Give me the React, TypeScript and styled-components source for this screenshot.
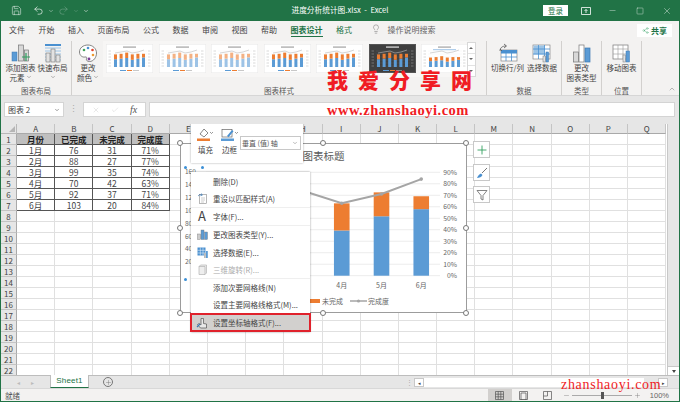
import React from 'react'
import styled, { createGlobalStyle } from 'styled-components'
import { ChevronDown, ChevronUp, Lightbulb, Minus, Square, X, Check, Plus, Share2, Save, Undo2, Redo2 } from 'lucide-react'

const font = '"Noto Sans CJK SC", "Noto Sans", sans-serif'
const green = '#217346'

const Global = createGlobalStyle`
  html,body{margin:0;padding:0;background:#fff;}
  #root{width:680px;height:402px;overflow:hidden;}
  *{box-sizing:border-box;}
`
const Frame = styled.div`
  position:relative;
  width:680px;
  height:402px;
  display:flex;
  flex-direction:column;
  overflow:hidden;
  font-family:${font};
  font-size:8px;
  color:#444;
  border:1px solid ${green};
  border-top:0;
  background:#e6e6e6;
`
const TitleBar = styled.div`
  position:relative;
  height:21px;
  flex:none;
  margin:0 -1px;
  padding:0 0 0 11px;
  background:${green};
  color:#fff;
  display:flex;
  align-items:center;
`
const QuickIcons = styled.div`
  display:flex;
  align-items:center;
  gap:4px;
  svg{display:block;}
`
const QuickGap = styled.span`
  width:3px;
`
const TitleText = styled.div`
  position:absolute;
  left:0;
  right:0;
  top:4px;
  text-align:center;
  font-size:7.7px;
  line-height:12px;
  color:#fff;
  white-space:pre;
`
const WinControls = styled.div`
  margin-left:auto;
  display:flex;
  align-items:center;
`
const Login = styled.div`
  width:25px;
  height:11px;
  background:#fff;
  color:${green};
  font-size:7.5px;
  line-height:11px;
  text-align:center;
  margin-right:4px;
`
const WinBtn = styled.div`
  width:27px;
  height:20px;
  display:flex;
  align-items:center;
  justify-content:center;
`
const TabRow = styled.div`
  height:19px;
  flex:none;
  display:flex;
  align-items:flex-start;
  padding-left:8px;
  gap:13.5px;
  background:#f3f2f1;
  position:relative;
`
const Tab = styled.div<{ $active?: boolean; $green?: boolean }>`
  height:16px;
  line-height:17px;
  font-size:8px;
  color:${p => (p.$active || p.$green ? green : '#444')};
  font-weight:${p => (p.$active ? 600 : 400)};
  border-bottom:${p => (p.$active ? `1.5px solid ${green}` : '0')};
`
const SearchHint = styled.div`
  margin-left:5px;
  display:flex;
  align-items:center;
  gap:7px;
  height:16px;
  color:#666;
  line-height:17px;
`
const ShareBtn = styled.div`
  position:absolute;
  right:7px;
  top:3px;
  width:35px;
  height:13px;
  background:#fff;
  display:flex;
  align-items:center;
  justify-content:center;
  gap:2px;
  color:${green};
  font-weight:700;
  font-size:8px;
`
const Ribbon = styled.div`
  height:56px;
  flex:none;
  display:flex;
  background:#f3f2f1;
  border-bottom:1px solid #d6d6d6;
  position:relative;
`
const Group = styled.div<{ $w: number }>`
  width:${p => p.$w}px;
  flex:none;
  display:flex;
  flex-direction:column;
  margin:1px 0 0;
  border-right:1px solid #d2d0ce;
  height:54px;
`
const GroupBody = styled.div`
  flex:1;
  min-height:0;
  display:flex;
  align-items:flex-start;
  justify-content:center;
`
const GroupSpacer = styled.div`
  flex:1;
`
const GroupLabel = styled.div`
  height:13px;
  line-height:17px;
  text-align:center;
  font-size:7.5px;
  color:#555;
`
const RibbonBtn = styled.div<{ $w: number; $ml?: number }>`
  width:${p => p.$w}px;
  margin-left:${p => p.$ml || 0}px;
  flex:none;
  display:flex;
  flex-direction:column;
  align-items:center;
  font-size:7.5px;
  line-height:9.5px;
  color:#444;
  text-align:center;
  white-space:nowrap;
  padding-top:2px;
  svg.big{display:block;}
`
const BtnLine = styled.span`
  display:flex;
  align-items:center;
  gap:1px;
  height:9.5px;
`
const Gallery = styled.div`
  display:flex;
  align-items:flex-start;
  margin-left:2px;
  padding:1px 0 0 3px;
  height:36px;
  gap:5.5px;
  background:#f7f6f5;
`
const Thumb = styled.svg`
  display:block;
  flex:none;
  margin-top:2px;
`
const GalleryScroll = styled.div`
  width:9px;
  height:35px;
  margin:1px 0 0 -1.5px;
  display:flex;
  flex-direction:column;
  background:#fff;
  border:1px solid #d8d8d8;
`
const ScrollCell = styled.div`
  flex:1;
  display:flex;
  align-items:center;
  justify-content:center;
  color:#555;
  border-bottom:1px solid #e2e2e2;
  &:last-child{border-bottom:0;}
  &::after{
    content:'';
    border-style:solid;
    border-color:#666 transparent transparent transparent;
    border-width:2px 2px 0 2px;
  }
  &:first-child::after{
    border-color:transparent transparent #666 transparent;
    border-width:0 2px 2px 2px;
  }
`
const Collapse = styled.div`
  position:absolute;
  right:3px;
  bottom:0;
  color:#555;
`
const FormulaBar = styled.div`
  flex:none;
  height:28px;
  padding:6px 4px 7px 3px;
  display:flex;
  align-items:stretch;
  background:#e6e6e6;
`
const NameBox = styled.div`
  width:60px;
  background:#fff;
  border:1px solid #d4d4d4;
  display:flex;
  align-items:center;
  justify-content:space-between;
  padding:0 3px 0 3px;
  font-size:8px;
  color:#444;
`
const Grip = styled.div`
  width:19px;
  color:#aaa;
  text-align:center;
  line-height:14px;
  font-size:9px;
`
const FxBox = styled.div`
  width:63px;
  background:#fff;
  border:1px solid #d4d4d4;
  display:flex;
  align-items:center;
  gap:11px;
  padding:0 6px 0 8px;
  color:#b8b8b8;
`
const Fx = styled.span`
  font-family:"Liberation Serif",serif;
  font-style:italic;
  font-size:10px;
  color:#555;
`
const FormulaInput = styled.div`
  flex:1;
  margin-left:3px;
  background:#fff;
  border:1px solid #d4d4d4;
`
const SheetArea = styled.div`
  position:relative;
  flex:1;
  min-height:0;
  display:flex;
  overflow:hidden;
  background:#fff;
`
const Grid = styled.div`
  flex:none;
  width:666px;
  display:grid;
  grid-template-columns:16px repeat(17,38.2px);
  grid-auto-rows:11px;
  grid-template-rows:10px;
  align-content:start;
  line-height:11px;
  color:#333;
`
const Corner = styled.div`
  background:#e6e6e6;
  border-right:1px solid #b8b8b8;
  border-bottom:1px solid #b8b8b8;
  position:relative;
  &::after{
    content:'';
    position:absolute;
    right:1px;
    bottom:1px;
    border-style:solid;
    border-width:0 0 6px 6px;
    border-color:transparent transparent #b5b5b5 transparent;
  }
`
const ColHead = styled.div`
  background:#e6e6e6;
  border-right:1px solid #c4c4c4;
  border-bottom:1px solid #a9a9a9;
  text-align:center;
  line-height:10px;
  font-size:8px;
  color:#444;
`
const RowHead = styled.div`
  background:#e6e6e6;
  border-right:1px solid #a9a9a9;
  border-bottom:1px solid #c4c4c4;
  text-align:center;
  font-size:8px;
  color:#444;
`
const Cell = styled.div`
  border-right:1px solid #e0e0e0;
  border-bottom:1px solid #e0e0e0;
`
const DataCell = styled.div<{ $head?: boolean }>`
  border-right:1px solid #555;
  border-bottom:1px solid #555;
  text-align:center;
  background:${p => (p.$head ? '#bfbfbf' : '#fff')};
  font-weight:${p => (p.$head ? 700 : 400)};
  color:${p => (p.$head ? '#222' : '#444')};
  font-size:8.5px;
`
const VScroll = styled.div`
  flex:1;
  background:#e6e6e6;
  border-left:1px solid #c8c8c8;
  position:relative;
`
const VArrow = styled.div`
  position:absolute;
  left:0;
  right:0;
  bottom:0;
  height:9px;
  background:#fff;
  display:flex;
  align-items:center;
  justify-content:center;
  border-top:1px solid #c8c8c8;
  &::after{
    content:'';
    border-style:solid;
    border-width:3px 2.5px 0 2.5px;
    border-color:#444 transparent transparent transparent;
  }
`
const ChartBox = styled.div`
  position:absolute;
  left:179px;
  top:19px;
  width:287px;
  height:170px;
  background:#fff;
  border:1px solid #9c9c9c;
`
const ChartSvg = styled.svg`
  position:absolute;
  left:0;
  top:0;
  display:block;
`
const ChartTitle = styled.div`
  position:absolute;
  left:0;
  right:0;
  top:4px;
  text-align:center;
  font-size:10.5px;
  line-height:16px;
  color:#595959;
`
const Handle = styled.div<{ $x: number; $y: number }>`
  position:absolute;
  left:${p => p.$x - 3}px;
  top:${p => p.$y - 3}px;
  width:6px;
  height:6px;
  border:1px solid #777;
  border-radius:50%;
  background:#fff;
`
const AxisDot = styled.div<{ $x: number; $y: number }>`
  position:absolute;
  left:${p => p.$x - 1.5}px;
  top:${p => p.$y - 1.5}px;
  width:3px;
  height:3px;
  border-radius:50%;
  background:#3b8fd6;
`
const SideBtn = styled.div<{ $y: number }>`
  position:absolute;
  left:472px;
  top:${p => p.$y}px;
  width:17px;
  height:17px;
  background:#fff;
  border:1px solid #c8c8c8;
  display:flex;
  align-items:center;
  justify-content:center;
`
const MiniBar = styled.div`
  position:absolute;
  left:190px;
  top:-1px;
  width:112px;
  height:40px;
  background:#fff;
  box-shadow:0 0 2px rgba(0,0,0,.35);
  display:flex;
  padding:5px 0 0 5px;
  gap:5px;
  font-size:7.5px;
  color:#444;
`
const MiniBtn = styled.div`
  display:flex;
  flex-direction:column;
  align-items:center;
  width:19px;
  gap:4px;
  line-height:10px;
  svg{display:block;}
`
const Combo = styled.div`
  position:absolute;
  left:49px;
  top:13px;
  width:61px;
  height:14px;
  border:1px solid #c8c8c8;
  display:flex;
  align-items:center;
  justify-content:space-between;
  padding:0 2px 0 1px;
  font-size:7px;
  color:#555;
`
const Menu = styled.div`
  position:absolute;
  left:190px;
  top:48px;
  width:118.5px;
  height:159.5px;
  background:#fff;
  box-shadow:0 0 2px rgba(0,0,0,.4);
  padding:1px 0;
`
const MenuItem = styled.div<{ $disabled?: boolean; $hot?: boolean; $sep?: boolean }>`
  height:17.6px;
  display:flex;
  align-items:center;
  font-size:7.5px;
  white-space:nowrap;
  color:${p => (p.$disabled ? '#aaa' : '#444')};
  background:${p => (p.$hot ? '#d2d0ce' : 'transparent')};
  outline:${p => (p.$hot ? '2px solid #e0222c' : '0')};
  outline-offset:-1px;
  border-bottom:${p => (p.$sep ? '1px solid #efefef' : '0')};
`
const MenuIcon = styled.div`
  width:22px;
  flex:none;
  display:flex;
  align-items:center;
  justify-content:center;
  font-size:13px;
  line-height:14px;
  color:#444;
  svg{display:block;}
`
const TabBar = styled.div`
  height:13px;
  flex:none;
  display:flex;
  align-items:stretch;
  background:#e6e6e6;
  border-top:1px solid #bdbdbd;
  position:relative;
`
const SheetNav = styled.div`
  width:49px;
  flex:none;
  display:flex;
  justify-content:center;
  align-items:center;
  gap:11px;
  color:#bbb;
  font-size:6px;
`
const SheetTab = styled.div`
  width:39px;
  margin-top:-1px;
  background:#fff;
  border-right:1px solid #bdbdbd;
  border-left:1px solid #bdbdbd;
  border-bottom:1.5px solid ${green};
  color:${green};
  text-align:center;
  font-family:"Liberation Sans",sans-serif;
  font-size:8px;
  line-height:12px;
  letter-spacing:.2px;
`
const AddSheet = styled.div`
  margin-left:14px;
  width:10px;
  height:10px;
  align-self:center;
  border:1px solid #777;
  border-radius:50%;
  display:flex;
  align-items:center;
  justify-content:center;
  color:#666;
`
const HScroll = styled.div`
  margin-left:auto;
  width:262px;
  display:flex;
  align-items:center;
  margin-right:11px;
  height:9px;
  align-self:center;
`
const HSplit = styled.div`
  width:8px;
  color:#aaa;
  font-size:7px;
  line-height:9px;
  flex:none;
`
const HBtn = styled.div<{ $right?: boolean }>`
  width:10px;
  height:9px;
  margin-left:${p => (p.$right ? 'auto' : '0')};
  background:#fff;
  border:1px solid #c8c8c8;
  flex:none;
  color:#444;
  font-size:5px;
  line-height:7px;
  text-align:center;
`
const HThumb = styled.div`
  width:220px;
  height:9px;
  background:#fff;
  flex:none;
`
const StatusBar = styled.div`
  height:13px;
  flex:none;
  display:flex;
  align-items:center;
  background:#f3f2f1;
  border-top:1px solid #d8d8d8;
  padding-left:4px;
  font-size:7.5px;
  color:#555;
`
const ViewBtns = styled.div`
  margin-left:auto;
  display:flex;
  align-items:stretch;
  height:12px;
`
const ViewBtn = styled.div<{ $on?: boolean }>`
  width:24px;
  background:${p => (p.$on ? '#d2d0ce' : 'transparent')};
  display:flex;
  align-items:center;
  justify-content:center;
  svg{display:block;}
`
const ZoomBox = styled.div`
  display:flex;
  align-items:center;
  margin-left:3px;
  color:#666;
`
const ZoomTrack = styled.div`
  position:relative;
  width:60px;
  height:1px;
  background:#aaa;
  margin:0 2px;
  &::after{
    content:'';
    position:absolute;
    left:29px;
    top:-3px;
    width:3px;
    height:7px;
    background:#555;
  }
`
const ZoomText = styled.span`
  font-family:"Liberation Sans",sans-serif;
  font-size:7.5px;
  margin:0 10px 0 9px;
`
const Mark = styled.div<{ $x: number; $y: number }>`
  position:absolute;
  left:${p => p.$x}px;
  top:${p => p.$y}px;
  color:#f01c24;
  white-space:nowrap;
`
const BigMark = styled(Mark)`
  display:flex;
  gap:10px;
  font-size:21px;
  line-height:24px;
  font-weight:900;
`
const UrlMark = styled(Mark)`
  font-family:"Liberation Serif",serif;
  font-size:14.5px;
  line-height:16px;
  font-weight:700;
  letter-spacing:.5px;
`
const FootMark = styled(Mark)`
  font-family:"Liberation Serif",serif;
  font-size:14px;
  line-height:16px;
  letter-spacing:.7px;
`

const tabs = ['文件', '开始', '插入', '页面布局', '公式', '数据', '审阅', '视图', '帮助']
const cols = 'ABCDEFGHIJKLMNOPQ'.split('')
const records = [
  { month: '1月', done: 76, left: 31, rate: 71 },
  { month: '2月', done: 88, left: 27, rate: 77 },
  { month: '3月', done: 99, left: 35, rate: 74 },
  { month: '4月', done: 70, left: 42, rate: 63 },
  { month: '5月', done: 92, left: 37, rate: 71 },
  { month: '6月', done: 103, left: 20, rate: 84 },
]
const tableCells: string[][] = [
  ['月份', '已完成', '未完成', '完成度'],
  ...records.map(r => [r.month, String(r.done), String(r.left), r.rate + '%']),
]

function SheetGrid() {
  return (
    <Grid>
      <Corner />
      {cols.map(c => <ColHead key={c}>{c}</ColHead>)}
      {Array.from({ length: 22 }).map((_, r) => (
        <React.Fragment key={r}>
          <RowHead>{r + 1}</RowHead>
          {cols.map((c, i) =>
            r < 7 && i < 4
              ? <DataCell key={c} $head={r === 0}>{tableCells[r][i]}</DataCell>
              : <Cell key={c} />
          )}
        </React.Fragment>
      ))}
    </Grid>
  )
}

// y 轴刻度换算，坐标直接用页面坐标
const baseY = 275.7
const barY = (v: number) => baseY - v * 0.646
const rateY = (v: number) => baseY - v * 1.15
const barX = (i: number) => 222.5 + i * 39.75

function MainChart() {
  const grid = Array.from({ length: 10 }).map((_, i) => baseY - i * 11.49)
  const line = records.map((r, i) => `${barX(i)},${rateY(r.rate)}`).join(' ')
  return (
    <ChartSvg width={285} height={168} viewBox="181 144 285 168">
      {grid.map((y, i) => <line key={i} x1={206} x2={440} y1={y} y2={y} stroke="#ececec" strokeWidth={1} />)}
      {records.map((r, i) => (
        <g key={r.month}>
          <rect x={barX(i) - 7.8} y={barY(r.done)} width={15.6} height={baseY - barY(r.done)} fill="#5b9bd5" />
          <rect x={barX(i) - 7.8} y={barY(r.done + r.left)} width={15.6} height={barY(r.done) - barY(r.done + r.left)} fill="#ed7d31" />
          {i > 2 && <text x={barX(i)} y={288} fontSize={7} fill="#666" textAnchor="middle">{r.month}</text>}
        </g>
      ))}
      <polyline points={line} fill="none" stroke="#a5a5a5" strokeWidth={2} />
      {records.map((r, i) => <circle key={i} cx={barX(i)} cy={rateY(r.rate)} r={1.8} fill="#a5a5a5" />)}
      {grid.map((y, i) => (
        <text key={i} x={457} y={y + 2.5} fontSize={6.8} fill="#666" textAnchor="end">{i * 10}%</text>
      ))}
      {[160, 140, 120, 100, 80, 60, 40, 20].map((v, i) => (
        <text key={v} x={185} y={174 + i * 12.9} fontSize={6.5} fill="#666">{v}</text>
      ))}
      <rect x={310} y={299} width={10} height={4} fill="#ed7d31" />
      <text x={322} y={304} fontSize={7} fill="#666">未完成</text>
      <line x1={350} x2={367} y1={301} y2={301} stroke="#a5a5a5" strokeWidth={1.5} />
      <circle cx={358.5} cy={301} r={1.6} fill="#a5a5a5" />
      <text x={368} y={304} fontSize={7} fill="#666">完成度</text>
    </ChartSvg>
  )
}

const thumbBars = [[13, 8], [14, 8], [15, 9], [12, 9], [14, 8], [16, 6]]
const axisTicks = [7, 10, 13, 16, 19, 22]

// 样式库缩略图，variant 1 为浅色，legendTop 时图例在标题下
function MiniChart({ dark, variant = 0, legendTop }: { dark?: boolean; variant?: number; legendTop?: boolean }) {
  const base = 23
  const k = legendTop ? 0.45 : 0.6
  const blue = variant === 1 ? '#9dc3e6' : '#5b9bd5'
  const orange = variant === 1 ? '#f4b183' : '#ed7d31'
  const tick = dark ? '#8a8a8a' : '#c8c8c8'
  return (
    <Thumb width={47} height={29} viewBox="0 0 47 29">
      <rect x={0.25} y={0.25} width={46.5} height={28.5} fill={dark ? '#3f3f3f' : '#fff'} stroke={dark ? '#3f3f3f' : '#e8e8e8'} strokeWidth={0.5} />
      <rect x={17} y={2.4} width={13} height={1.4} fill={dark ? '#ccc' : '#b0b0b0'} />
      {legendTop && <rect x={12} y={5.2} width={23} height={1} fill="#9dc3e6" />}
      {axisTicks.map(y => (
        <g key={y}>
          <line x1={7} x2={41} y1={y} y2={y} stroke={dark ? '#555' : '#f0f0f0'} strokeWidth={0.5} />
          <line x1={2.5} x2={5} y1={y} y2={y} stroke={tick} strokeWidth={0.7} />
          <line x1={42} x2={44.5} y1={y} y2={y} stroke={tick} strokeWidth={0.7} />
        </g>
      ))}
      {thumbBars.map((b, i) => (
        <g key={i}>
          <rect x={8 + i * 5.6} y={base - b[0] * k} width={3} height={b[0] * k} fill={blue} />
          <rect x={8 + i * 5.6} y={base - (b[0] + b[1]) * k} width={3} height={b[1] * k} fill={orange} />
        </g>
      ))}
      <polyline points="9,9 15,8 21,7 26,9 32,8 38,6" fill="none" stroke={dark ? '#bbb' : '#b8b8b8'} strokeWidth={0.6} />
      {!legendTop && <rect x={14} y={26} width={6} height={1} fill="#5b9bd5" />}
      {!legendTop && <rect x={21} y={26} width={5} height={1} fill="#ed7d31" />}
      {!legendTop && <rect x={27} y={26} width={6} height={1} fill={tick} />}
    </Thumb>
  )
}

function AddElementIcon() {
  return (
    <svg className="big" width={20} height={20} viewBox="0 0 20 20">
      <rect x={1} y={9} width={5} height={9} fill="#5b9bd5" stroke="#3d7ab3" strokeWidth={0.5} />
      <rect x={7.5} y={2} width={5} height={16} fill="#d8d8d8" stroke="#777" strokeWidth={0.7} />
      <rect x={13.5} y={7} width={4} height={11} fill="#d8d8d8" stroke="#777" strokeWidth={0.7} />
      <path d="M11 14h8M15 10v8" stroke="#2f9e5f" strokeWidth={1.2} />
    </svg>
  )
}
function QuickLayoutIcon() {
  return (
    <svg className="big" width={20} height={20} viewBox="0 0 20 20">
      <rect x={2} y={1} width={16} height={2} fill="#4a90d0" />
      {[5, 8, 11, 14, 17].map(y => <line key={y} x1={2} x2={18} y1={y} y2={y} stroke="#9cc4e6" strokeWidth={1} />)}
      <rect x={3} y={10} width={4} height={9} fill="#e2e2e2" stroke="#777" strokeWidth={0.6} />
      <rect x={8} y={6} width={4} height={13} fill="#e2e2e2" stroke="#777" strokeWidth={0.6} />
      <rect x={13} y={12} width={4} height={7} fill="#e2e2e2" stroke="#777" strokeWidth={0.6} />
    </svg>
  )
}
function PaletteIcon() {
  return (
    <svg className="big" width={20} height={20} viewBox="0 0 20 20">
      <path d="M10 2C5 2 1.500 5 1.500 9s3.500 5.500 5.500 5 2 1 1.500 2 .5 2.500 3 2.500c4 0 7-4 7-8.500S14.500 2 10 2z" fill="#fff" stroke="#666" strokeWidth={0.8} />
      <circle cx={6} cy={7} r={1.3} fill="#3fa35b" />
      <circle cx={10} cy={5} r={1.3} fill="#4a90d0" />
      <circle cx={14.500} cy={7} r={1.3} fill="#e0422b" />
      <circle cx={15} cy={12} r={1.3} fill="#ed9a31" />
      <circle cx={11} cy={16} r={1.4} fill="#7d3c98" />
    </svg>
  )
}
function SwitchIcon() {
  return (
    <svg className="big" width={20} height={20} viewBox="0 0 20 20">
      <rect x={3} y={7} width={16} height={11} fill="#fff" stroke="#888" strokeWidth={0.7} />
      <rect x={3} y={7} width={16} height={3.500} fill="#4a90d0" />
      <path d="M8 7v11M13.500 7v11M3 14h16" stroke="#4a90d0" strokeWidth={0.8} />
      <path d="M2 8c0-3 2-5 6-5M6 1l2.500 2L6 5M2 6l2 2" fill="none" stroke="#555" strokeWidth={0.8} />
    </svg>
  )
}
function SelectDataIcon() {
  return (
    <svg className="big" width={20} height={20} viewBox="0 0 20 20">
      <rect x={1} y={2} width={17} height={14} fill="#fff" stroke="#888" strokeWidth={0.7} />
      <rect x={1.500} y={2.500} width={11} height={9} fill="#9cc4e6" />
      <path d="M1 6h17M1 11h17M6.500 2v14M12.500 2v14" stroke="#4a90d0" strokeWidth={0.8} />
      <rect x={11} y={13} width={2.500} height={6} fill="#e2e2e2" stroke="#777" strokeWidth={0.5} />
      <rect x={14} y={9} width={2.500} height={10} fill="#5b9bd5" stroke="#3d7ab3" strokeWidth={0.5} />
    </svg>
  )
}
function ChangeTypeIcon() {
  return (
    <svg className="big" width={20} height={20} viewBox="0 0 20 20">
      <rect x={1.500} y={9} width={5} height={10} fill="#d8d8d8" stroke="#777" strokeWidth={0.7} />
      <rect x={7} y={2} width={5} height={17} fill="#fff" stroke="#777" strokeWidth={0.7} />
      <rect x={13} y={5} width={5} height={14} fill="#5b9bd5" stroke="#3d7ab3" strokeWidth={0.7} />
    </svg>
  )
}
function MoveChartIcon() {
  return (
    <svg className="big" width={20} height={20} viewBox="0 0 20 20">
      <rect x={1} y={2} width={15} height={14} fill="#fff" stroke="#777" strokeWidth={0.7} />
      <path d="M1 6h15M1 11h15M6 2v14M11 2v14" stroke="#999" strokeWidth={0.6} />
      <rect x={11} y={12} width={2.500} height={7} fill="#e2e2e2" stroke="#777" strokeWidth={0.5} />
      <rect x={14} y={8} width={3.500} height={11} fill="#5b9bd5" stroke="#3d7ab3" strokeWidth={0.5} />
    </svg>
  )
}
function SmallChart({ grey }: { grey?: boolean }) {
  return (
    <svg width={11} height={11} viewBox="0 0 11 11">
      <rect x={0.500} y={5} width={3} height={5.500} fill={grey ? '#ddd' : '#ccc'} stroke="#777" strokeWidth={0.4} />
      <rect x={4} y={1} width={3} height={9.500} fill={grey ? '#ddd' : '#5b9bd5'} stroke="#777" strokeWidth={0.4} />
      <rect x={7.500} y={3} width={3} height={7.500} fill={grey ? '#ddd' : '#5b9bd5'} stroke="#777" strokeWidth={0.4} />
    </svg>
  )
}
function DataGridIcon() {
  return (
    <svg width={11} height={11} viewBox="0 0 11 11">
      <rect x={0.500} y={0.500} width={8} height={8} fill="#4a90d0" />
      <path d="M0.500 3.300h8M0.500 6h8M3.300 .5v8M6 .5v8" stroke="#fff" strokeWidth={0.5} />
      <rect x={7} y={6} width={1.800} height={5} fill="#bbb" />
      <rect x={9} y={4} width={1.800} height={7} fill="#5b9bd5" />
    </svg>
  )
}

const menuItems = [
  { label: '删除(D)' },
  { label: '重设以匹配样式(A)', icon: 'reset', sep: true },
  { label: '字体(F)...', icon: 'font', sep: true },
  { label: '更改图表类型(Y)...', icon: 'type' },
  { label: '选择数据(E)...', icon: 'data' },
  { label: '三维旋转(R)...', icon: 'rotate', disabled: true, sep: true },
  { label: '添加次要网格线(N)' },
  { label: '设置主要网格线格式(M)...' },
  { label: '设置坐标轴格式(F)...', icon: 'format', hot: true },
]

function MenuGlyph({ name }: { name?: string }) {
  if (name === 'reset') {
    return (
      <svg width={11} height={11} viewBox="0 0 11 11">
        <rect x={2.500} y={1.500} width={7} height={9} fill="#fff" stroke="#888" strokeWidth={0.6} />
        <path d="M1 3a3 3 0 0 1 4-1M4.500 .5l.8 1.700-1.800.5" fill="none" stroke="#3d7ab3" strokeWidth={0.7} />
        <path d="M4 5h4M4 7h4M4 9h3" stroke="#999" strokeWidth={0.5} />
      </svg>
    )
  }
  if (name === 'font') return <>A</>
  if (name === 'type') return <SmallChart />
  if (name === 'data') return <DataGridIcon />
  if (name === 'rotate') {
    return (
      <svg width={11} height={11} viewBox="0 0 11 11">
        <path d="M2 2.500h6v8H2zM2 2.500l1.500-1.500h6v8L8 10.500" fill="#eee" stroke="#aaa" strokeWidth={0.6} />
      </svg>
    )
  }
  if (name === 'format') {
    return (
      <svg width={12} height={12} viewBox="0 0 12 12">
        <path d="M5 1.500h2.500v5l3 .5v4H4.500L1.500 7.500 3 6.500l2 1.500z" fill="#e8e8e8" stroke="#555" strokeWidth={0.7} />
        <path d="M1 10l3-3" stroke="#3d7ab3" strokeWidth={1.200} />
      </svg>
    )
  }
  return null
}

export default function App() {
  return (
    <Frame>
      <Global />
      <TitleBar>
        <QuickIcons>
          <Save size={11} strokeWidth={1.1} />
          <QuickGap />
          <Undo2 size={11} strokeWidth={1.4} />
          <ChevronDown size={6} strokeWidth={1.5} />
          <Redo2 size={11} strokeWidth={1.1} color="#7fae96" />
          <ChevronDown size={6} strokeWidth={1.5} color="#7fae96" />
          <ChevronDown size={6} strokeWidth={2} />
        </QuickIcons>
        <TitleText>进度分析统计图.xlsx  -  Excel</TitleText>
        <WinControls>
          <Login>登录</Login>
          <WinBtn>
            <svg width={10} height={8} viewBox="0 0 10 8"><path d="M.5.5h9v7h-9zM5 6V2.500M3.500 4L5 2.500 6.500 4" fill="none" stroke="#fff" strokeWidth={0.8} /></svg>
          </WinBtn>
          <WinBtn><Minus size={9} strokeWidth={1} /></WinBtn>
          <WinBtn><Square size={8} strokeWidth={1.1} /></WinBtn>
          <WinBtn><X size={10} strokeWidth={1} /></WinBtn>
        </WinControls>
      </TitleBar>
      <TabRow>
        {tabs.map(t => <Tab key={t}>{t}</Tab>)}
        <Tab $active>图表设计</Tab>
        <Tab $green>格式</Tab>
        <SearchHint>
          <Lightbulb size={10} strokeWidth={1} color="#555" />
          操作说明搜索
        </SearchHint>
        <ShareBtn><Share2 size={7} strokeWidth={1.2} color="#2f9e5f" />共享</ShareBtn>
      </TabRow>
      <Ribbon>
        <Group $w={71}>
          <GroupBody>
            <RibbonBtn $w={33}><AddElementIcon /><BtnLine>添加图表</BtnLine><BtnLine>元素<ChevronDown size={6} strokeWidth={1.5} /></BtnLine></RibbonBtn>
            <RibbonBtn $w={31}><QuickLayoutIcon /><BtnLine>快速布局</BtnLine><BtnLine><ChevronDown size={6} strokeWidth={1.5} /></BtnLine></RibbonBtn>
          </GroupBody>
          <GroupLabel>图表布局</GroupLabel>
        </Group>
        <Group $w={415}>
          <GroupBody>
            <RibbonBtn $w={26} $ml={3}><PaletteIcon /><BtnLine>更改</BtnLine><BtnLine>颜色<ChevronDown size={6} strokeWidth={1.5} /></BtnLine></RibbonBtn>
            <Gallery>
              <MiniChart />
              <MiniChart variant={1} />
              <MiniChart variant={1} />
              <MiniChart />
              <MiniChart />
              <MiniChart dark />
              <MiniChart legendTop />
            </Gallery>
            <GalleryScroll>
              <ScrollCell />
              <ScrollCell />
              <ScrollCell />
            </GalleryScroll>
            <GroupSpacer />
          </GroupBody>
          <GroupLabel>图表样式</GroupLabel>
        </Group>
        <Group $w={75}>
          <GroupBody>
            <RibbonBtn $w={36}><SwitchIcon />切换行/列</RibbonBtn>
            <RibbonBtn $w={33}><SelectDataIcon />选择数据</RibbonBtn>
          </GroupBody>
          <GroupLabel>数据</GroupLabel>
        </Group>
        <Group $w={40}>
          <GroupBody>
            <RibbonBtn $w={38}><ChangeTypeIcon />更改<BtnLine>图表类型</BtnLine></RibbonBtn>
          </GroupBody>
          <GroupLabel>类型</GroupLabel>
        </Group>
        <Group $w={40}>
          <GroupBody>
            <RibbonBtn $w={38}><MoveChartIcon />移动图表</RibbonBtn>
          </GroupBody>
          <GroupLabel>位置</GroupLabel>
        </Group>
        <Collapse><ChevronUp size={8} strokeWidth={1.2} /></Collapse>
      </Ribbon>
      <FormulaBar>
        <NameBox>图表 2<ChevronDown size={6} strokeWidth={2} /></NameBox>
        <Grip>⋮</Grip>
        <FxBox>
          <X size={8} strokeWidth={1} />
          <Check size={8} strokeWidth={1} />
          <Fx>fx</Fx>
        </FxBox>
        <FormulaInput />
      </FormulaBar>
      <SheetArea>
        <SheetGrid />
        <VScroll><VArrow /></VScroll>
        <ChartBox>
          <MainChart />
          <ChartTitle>图表标题</ChartTitle>
        </ChartBox>
        {[[179, 19], [322, 19], [465, 19], [179, 104], [465, 104], [179, 189], [322, 189], [465, 189]].map(([x, y]) => (
          <Handle key={`${x}-${y}`} $x={x} $y={y} />
        ))}
        <AxisDot $x={184} $y={43} />
        <AxisDot $x={201} $y={43} />
        <AxisDot $x={184} $y={155} />
        <MiniBar>
          <MiniBtn>
            <svg width={18} height={13} viewBox="0 0 18 13">
              <path d="M3 6l4-5 4 4-4 4z" fill="#fff" stroke="#555" strokeWidth={0.7} />
              <path d="M13 4l1.500 1.500L16 4" fill="none" stroke="#555" strokeWidth={0.6} />
              <rect x={0} y={10.500} width={13} height={2.500} fill="#ed7d31" />
            </svg>
            填充
          </MiniBtn>
          <MiniBtn>
            <svg width={18} height={13} viewBox="0 0 18 13">
              <rect x={1} y={1.500} width={10} height={7.500} fill="#fff" stroke="#666" strokeWidth={0.7} />
              <path d="M6 8l5-6 1.500 1.300-5 6z" fill="#4a90d0" />
              <path d="M14 4l1.500 1.500L17 4" fill="none" stroke="#555" strokeWidth={0.6} />
              <rect x={0} y={10.500} width={13} height={2.500} fill="#5b9bd5" />
            </svg>
            边框
          </MiniBtn>
          <Combo>垂直 (值) 轴<ChevronDown size={6} strokeWidth={1.6} /></Combo>
        </MiniBar>
        <Menu>
          {menuItems.map(m => (
            <MenuItem key={m.label} $disabled={m.disabled} $hot={m.hot} $sep={m.sep}>
              <MenuIcon><MenuGlyph name={m.icon} /></MenuIcon>
              {m.label}
            </MenuItem>
          ))}
        </Menu>
        <SideBtn $y={17}><Plus size={14} strokeWidth={1.5} color="#2e9e5b" /></SideBtn>
        <SideBtn $y={40}>
          <svg width={12} height={12} viewBox="0 0 12 12">
            <path d="M11 1L6 6" stroke="#777" strokeWidth={1} />
            <path d="M1 11c2 0 5-1 5.500-3L5 6.500C3 7 2 9 1 11z" fill="#4a90d0" />
          </svg>
        </SideBtn>
        <SideBtn $y={62}>
          <svg width={12} height={12} viewBox="0 0 12 12">
            <path d="M1 1.500h10L7 6.500V11L5 10V6.500z" fill="#fff" stroke="#666" strokeWidth={0.8} />
          </svg>
        </SideBtn>
      </SheetArea>
      <TabBar>
        <SheetNav><span>◂</span><span>▸</span></SheetNav>
        <SheetTab>Sheet1</SheetTab>
        <AddSheet><Plus size={7} strokeWidth={1.3} /></AddSheet>
        <HScroll>
          <HSplit>⋮</HSplit>
          <HBtn>◂</HBtn>
          <HThumb />
          <HBtn $right>▸</HBtn>
        </HScroll>
      </TabBar>
      <StatusBar>
        就绪
        <ViewBtns>
          <ViewBtn $on>
            <svg width={9} height={9} viewBox="0 0 9 9"><path d="M.5.5h8v8h-8zM.5 3.200h8M.5 5.800h8M3.200.5v8M5.800.5v8" fill="none" stroke="#555" strokeWidth={0.7} /></svg>
          </ViewBtn>
          <ViewBtn>
            <svg width={9} height={9} viewBox="0 0 9 9"><path d="M.5.5h8v8h-8zM2 2h5v7H2z" fill="none" stroke="#555" strokeWidth={0.7} /></svg>
          </ViewBtn>
          <ViewBtn>
            <svg width={9} height={9} viewBox="0 0 9 9"><path d="M.5.5h8v8h-8zM.5 5h4V.5M.5 5" fill="none" stroke="#555" strokeWidth={0.7} /></svg>
          </ViewBtn>
        </ViewBtns>
        <ZoomBox>
          <Minus size={7} strokeWidth={1.2} />
          <ZoomTrack />
          <Plus size={7} strokeWidth={1.2} />
          <ZoomText>100%</ZoomText>
        </ZoomBox>
      </StatusBar>
      <BigMark $x={326} $y={67}>
        {'我爱分享网'.split('').map(c => <span key={c}>{c}</span>)}
      </BigMark>
      <UrlMark $x={326} $y={102}>www.zhanshaoyi.com</UrlMark>
      <FootMark $x={560} $y={377}>zhanshaoyi.com</FootMark>
    </Frame>
  )
}
